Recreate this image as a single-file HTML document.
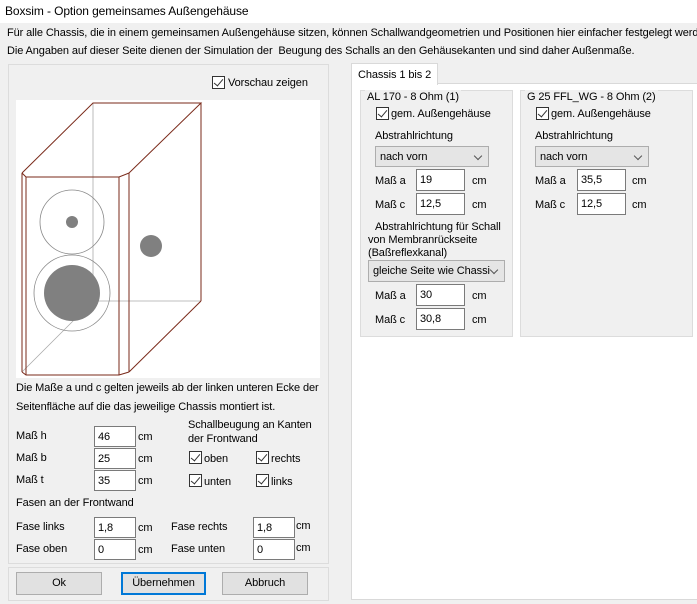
<!DOCTYPE html>
<html><head><meta charset="utf-8"><style>
*{margin:0;padding:0;box-sizing:border-box}
body{width:697px;height:604px;background:#f0f0f0;font-family:"Liberation Sans",sans-serif;font-size:11px;letter-spacing:-0.1px;color:#000;position:relative;overflow:hidden}
.a{position:absolute;white-space:nowrap;line-height:14px}
.in{position:absolute;background:#fff;border:1px solid #7a7a7a;padding:3px 3px 0;line-height:14px;white-space:nowrap}
.cb{position:absolute;width:13px;height:13px;border:1px solid #333;background:#fff}
.cb:after{content:"";position:absolute;left:3px;top:0px;width:4px;height:8px;border-right:1.3px solid #333;border-bottom:1.3px solid #333;transform:rotate(40deg)}
.combo{position:absolute;background:#e5e5e5;border:1px solid #adadad;padding:4px 4px 0;line-height:13px;white-space:nowrap}
.combo:after{content:"";position:absolute;right:7px;top:6px;width:5px;height:5px;border-right:1px solid #555;border-bottom:1px solid #555;transform:rotate(45deg)}
.btn{position:absolute;background:#e1e1e1;border:1px solid #adadad;text-align:center;line-height:21px}
.grp{position:absolute;border:1px solid #dcdcdc;background:#f0f0f0}
</style></head><body>
<div style="position:absolute;left:0;top:0;width:697px;height:23px;background:#fff"></div>
<div class="a" style="left:5px;top:4px;font-size:12px">Boxsim - Option gemeinsames Außengehäuse</div>
<div style="position:absolute;left:0;top:0;width:697px;height:604px;overflow:hidden">
<div class="a" style="left:7px;top:26px">Für alle Chassis, die in einem gemeinsamen Außengehäuse sitzen, können Schallwandgeometrien und Positionen hier einfacher festgelegt werden.</div>
<div class="a" style="left:7px;top:44px">Die Angaben auf dieser Seite dienen der Simulation der&nbsp; Beugung des Schalls an den Gehäusekanten und sind daher Außenmaße.</div>
</div>

<div style="position:absolute;left:8px;top:64px;width:321px;height:500px;border:1px solid #dcdcdc"></div>
<div class="cb" style="left:212px;top:76px"></div>
<div class="a" style="left:228px;top:76px">Vorschau zeigen</div>
<svg style="position:absolute;left:16px;top:100px" width="304" height="278" viewBox="16 100 304 278">
<rect x="16" y="100" width="304" height="278" fill="#fff"/>
<g stroke="#aaa" stroke-width="0.8" fill="none">
<line x1="93" y1="103" x2="93" y2="301"/><line x1="93" y1="301" x2="201" y2="301"/><line x1="93" y1="301" x2="22" y2="372"/>
</g>
<g stroke="#7a2a1a" stroke-width="1" fill="none">
<polyline points="22,173 93,103 201,103 129,173"/>
<line x1="201" y1="103" x2="201" y2="301"/><line x1="201" y1="301" x2="129" y2="372"/>
<polyline points="22,173 26,177 119,177 129,173"/>
<polyline points="22,372 26,375 119,375 129,372"/>
<line x1="22" y1="173" x2="22" y2="372"/><line x1="26" y1="177" x2="26" y2="375"/>
<line x1="119" y1="177" x2="119" y2="375"/><line x1="129" y1="173" x2="129" y2="372"/>
</g>
<circle cx="72" cy="222" r="32" fill="none" stroke="#888" stroke-width="0.8"/>
<circle cx="72" cy="222" r="6" fill="#808080"/>
<circle cx="72" cy="293" r="38" fill="none" stroke="#888" stroke-width="0.8"/>
<circle cx="72" cy="293" r="28" fill="#808080"/>
<circle cx="151" cy="246" r="11" fill="#808080"/>
</svg>
<div class="a" style="left:16px;top:381px">Die Maße a und c gelten jeweils ab der linken unteren Ecke der</div>
<div class="a" style="left:16px;top:400px">Seitenfläche auf die das jeweilige Chassis montiert ist.</div>
<div class="a" style="left:16px;top:429px">Maß h</div><div class="in" style="left:94px;top:426px;width:42px;height:21px">46</div><div class="a" style="left:138px;top:430px">cm</div>
<div class="a" style="left:16px;top:451px">Maß b</div><div class="in" style="left:94px;top:448px;width:42px;height:21px">25</div><div class="a" style="left:138px;top:452px">cm</div>
<div class="a" style="left:16px;top:473px">Maß t</div><div class="in" style="left:94px;top:470px;width:42px;height:21px">35</div><div class="a" style="left:138px;top:474px">cm</div>
<div class="a" style="left:188px;top:418px">Schallbeugung an Kanten</div>
<div class="a" style="left:188px;top:432px">der Frontwand</div>
<div class="cb" style="left:189px;top:451px"></div><div class="a" style="left:204px;top:452px">oben</div>
<div class="cb" style="left:256px;top:451px"></div><div class="a" style="left:271px;top:452px">rechts</div>
<div class="cb" style="left:189px;top:474px"></div><div class="a" style="left:204px;top:475px">unten</div>
<div class="cb" style="left:256px;top:474px"></div><div class="a" style="left:271px;top:475px">links</div>
<div class="a" style="left:16px;top:496px">Fasen an der Frontwand</div>
<div class="a" style="left:16px;top:520px">Fase links</div><div class="in" style="left:94px;top:517px;width:42px;height:21px">1,8</div><div class="a" style="left:138px;top:521px">cm</div>
<div class="a" style="left:16px;top:542px">Fase oben</div><div class="in" style="left:94px;top:539px;width:42px;height:21px">0</div><div class="a" style="left:138px;top:543px">cm</div>
<div class="a" style="left:171px;top:520px">Fase rechts</div><div class="in" style="left:253px;top:517px;width:42px;height:21px">1,8</div><div class="a" style="left:296px;top:519px">cm</div>
<div class="a" style="left:171px;top:542px">Fase unten</div><div class="in" style="left:253px;top:539px;width:42px;height:21px">0</div><div class="a" style="left:296px;top:541px">cm</div>

<div style="position:absolute;left:8px;top:567px;width:321px;height:34px;border:1px solid #dcdcdc"></div>
<div class="btn" style="left:16px;top:572px;width:86px;height:23px">Ok</div>
<div class="btn" style="left:121px;top:572px;width:85px;height:23px;border:2px solid #0078d7;line-height:19px">Übernehmen</div>
<div class="btn" style="left:222px;top:572px;width:86px;height:23px">Abbruch</div>

<div style="position:absolute;left:351px;top:83px;width:346px;height:517px;background:#fff;border:1px solid #d9d9d9;border-right:none"></div>
<div style="position:absolute;left:351px;top:63px;width:87px;height:22px;background:#fff;border:1px solid #d9d9d9;border-bottom:none"></div>
<div class="a" style="left:358px;top:68px">Chassis 1 bis 2</div>

<div class="grp" style="left:360px;top:90px;width:153px;height:247px"></div>
<div class="a" style="left:365px;top:90px;background:#f0f0f0;padding:0 2px">AL 170 - 8 Ohm (1)</div>
<div class="cb" style="left:376px;top:107px"></div><div class="a" style="left:391px;top:107px">gem. Außengehäuse</div>
<div class="a" style="left:375px;top:129px">Abstrahlrichtung</div>
<div class="combo" style="left:375px;top:146px;width:114px;height:21px">nach vorn</div>
<div class="a" style="left:375px;top:174px">Maß a</div><div class="in" style="left:416px;top:169px;width:49px;height:22px">19</div><div class="a" style="left:472px;top:174px">cm</div>
<div class="a" style="left:375px;top:198px">Maß c</div><div class="in" style="left:416px;top:193px;width:49px;height:22px">12,5</div><div class="a" style="left:472px;top:198px">cm</div>
<div class="a" style="left:375px;top:220px">Abstrahlrichtung für Schall</div>
<div class="a" style="left:368px;top:233px">von Membranrückseite</div>
<div class="a" style="left:368px;top:246px">(Baßreflexkanal)</div>
<div class="combo" style="left:368px;top:260px;width:137px;height:22px">gleiche Seite wie Chassi</div>
<div class="a" style="left:375px;top:289px">Maß a</div><div class="in" style="left:416px;top:284px;width:49px;height:22px">30</div><div class="a" style="left:472px;top:289px">cm</div>
<div class="a" style="left:375px;top:313px">Maß c</div><div class="in" style="left:416px;top:308px;width:49px;height:22px">30,8</div><div class="a" style="left:472px;top:313px">cm</div>

<div class="grp" style="left:520px;top:90px;width:173px;height:247px"></div>
<div class="a" style="left:525px;top:90px;background:#f0f0f0;padding:0 2px">G 25 FFL_WG - 8 Ohm (2)</div>
<div class="cb" style="left:536px;top:107px"></div><div class="a" style="left:551px;top:107px">gem. Außengehäuse</div>
<div class="a" style="left:535px;top:129px">Abstrahlrichtung</div>
<div class="combo" style="left:535px;top:146px;width:114px;height:21px">nach vorn</div>
<div class="a" style="left:535px;top:174px">Maß a</div><div class="in" style="left:577px;top:169px;width:49px;height:22px">35,5</div><div class="a" style="left:632px;top:174px">cm</div>
<div class="a" style="left:535px;top:198px">Maß c</div><div class="in" style="left:577px;top:193px;width:49px;height:22px">12,5</div><div class="a" style="left:632px;top:198px">cm</div>
</body></html>
